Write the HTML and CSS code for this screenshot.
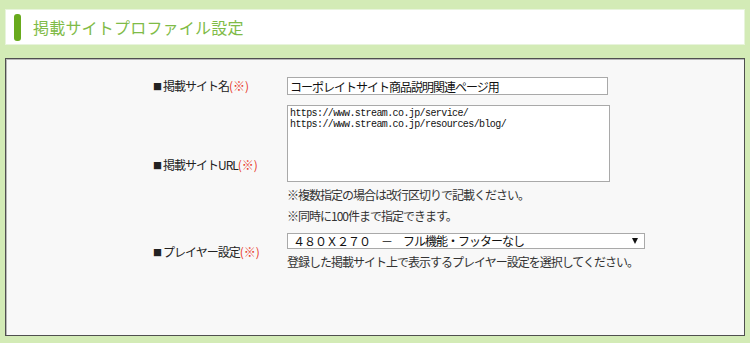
FILE: index.html
```html
<!DOCTYPE html>
<html lang="ja">
<head>
<meta charset="utf-8">
<title>掲載サイトプロファイル設定</title>
<link rel="stylesheet" href="styles.css">
</head>
<body>
<div class="page">
  <div class="header">
    <span class="header-bar"></span>
    <h1 class="header-title">掲載サイトプロファイル設定</h1>
  </div>
  <div class="panel">
    <div class="form">
      <div class="row row-name">
        <div class="label"><span class="sq">■</span>掲載サイト名<span class="req">(※)</span></div>
        <div class="field">
          <input class="text-input" type="text" value="コーポレイトサイト商品説明関連ページ用">
        </div>
      </div>
      <div class="row row-url">
        <div class="label"><span class="sq">■</span>掲載サイトURL<span class="req">(※)</span></div>
        <div class="field">
          <textarea class="textarea">https://www.stream.co.jp/service/
https://www.stream.co.jp/resources/blog/</textarea>
          <p class="note note-first">※複数指定の場合は改行区切りで記載ください。</p>
          <p class="note">※同時に100件まで指定できます。</p>
        </div>
      </div>
      <div class="row row-player">
        <div class="label"><span class="sq">■</span>プレイヤー設定<span class="req">(※)</span></div>
        <div class="field">
          <div class="select-wrap">
            <select class="select">
              <option>４８０Ｘ２７０　－　フル機能・フッターなし</option>
            </select>
          </div>
          <p class="hint">登録した掲載サイト上で表示するプレイヤー設定を選択してください。</p>
        </div>
      </div>
    </div>
  </div>
</div>
</body>
</html>
```
FILE: styles.css
```css
html, body {
  margin: 0;
  padding: 0;
}
body {
  background: #d3ebb6;
  font-family: "Noto Sans CJK JP", "Noto Sans", sans-serif;
  color: #222;
}
.page {
  padding: 9px 5px 6px 5px;
}
.header {
  height: 34px;
  background: #ffffff;
  border: 1px solid #e8f4dc;
  display: flex;
  align-items: center;
  padding-left: 8px;
}
.header-bar {
  width: 7px;
  height: 27px;
  border-radius: 3px;
  background: #68aa1d;
  flex: none;
}
.header-title {
  margin: 0 0 0 12px;
  font-size: 16px;
  font-weight: normal;
  color: #7fbb47;
  letter-spacing: 0.2px;
  line-height: 20px;
}
.panel {
  box-sizing: border-box;
  margin-top: 13px;
  height: 278px;
  background: #f8f8f8;
  border: 1px solid #4f4f4f;
  box-shadow: inset 1px 1px 0 #b8b8b8;
  padding: 18px 0 0 147px;
}
.form {
  display: flex;
  flex-direction: column;
}
.row {
  display: grid;
  grid-template-columns: 134px 1fr;
  align-items: center;
}
.row-url {
  margin-top: 10px;
}
.row-player {
  margin-top: 7px;
}
.label {
  font-size: 12px;
  letter-spacing: -1px;
  color: #222;
  line-height: 16px;
}
.sq {
  font-size: 9px;
  letter-spacing: 0;
  margin-right: 1px;
  vertical-align: 1px;
}
.req {
  color: #e8392a;
  letter-spacing: 0;
}
.field {
  display: flex;
  flex-direction: column;
  align-items: flex-start;
}
.text-input {
  display: block;
  box-sizing: border-box;
  width: 321px;
  height: 18px;
  margin: 0;
  padding: 0 2px;
  border: 1px solid #a9a9a9;
  background: #fff;
  font-family: "Noto Sans CJK JP", sans-serif;
  font-size: 12px;
  letter-spacing: -1px;
  color: #111;
  outline: none;
}
.textarea {
  display: block;
  box-sizing: border-box;
  width: 323px;
  height: 77px;
  margin: 0;
  padding: 2px 2px;
  border: 1px solid #a9a9a9;
  background: #fff;
  font-family: "Liberation Mono", "DejaVu Sans Mono", monospace;
  font-size: 10px;
  letter-spacing: -0.6px;
  line-height: 11px;
  color: #111;
  resize: none;
  outline: none;
  overflow: hidden;
}
.note {
  margin: 0;
  font-size: 12px;
  letter-spacing: -1px;
  line-height: 21px;
  color: #333;
}
.note-first {
  margin-top: 2px;
}
.select-wrap {
  position: relative;
  width: 358px;
  height: 16px;
}
.select-wrap::after {
  content: "";
  position: absolute;
  right: 7px;
  top: 5px;
  border-left: 3px solid transparent;
  border-right: 3px solid transparent;
  border-top: 6px solid #111;
  pointer-events: none;
}
.select {
  display: block;
  -webkit-appearance: none;
  appearance: none;
  box-sizing: border-box;
  width: 358px;
  height: 16px;
  margin: 0;
  padding: 0 5px;
  border: 1px solid #a9a9a9;
  border-radius: 0;
  background: #fff;
  font-family: "Noto Sans CJK JP", sans-serif;
  font-size: 12px;
  letter-spacing: -1px;
  line-height: 14px;
  color: #111;
  outline: none;
}
.hint {
  margin: 3px 0 0 0;
  font-size: 12px;
  letter-spacing: -1px;
  line-height: 20px;
  color: #333;
}
```
